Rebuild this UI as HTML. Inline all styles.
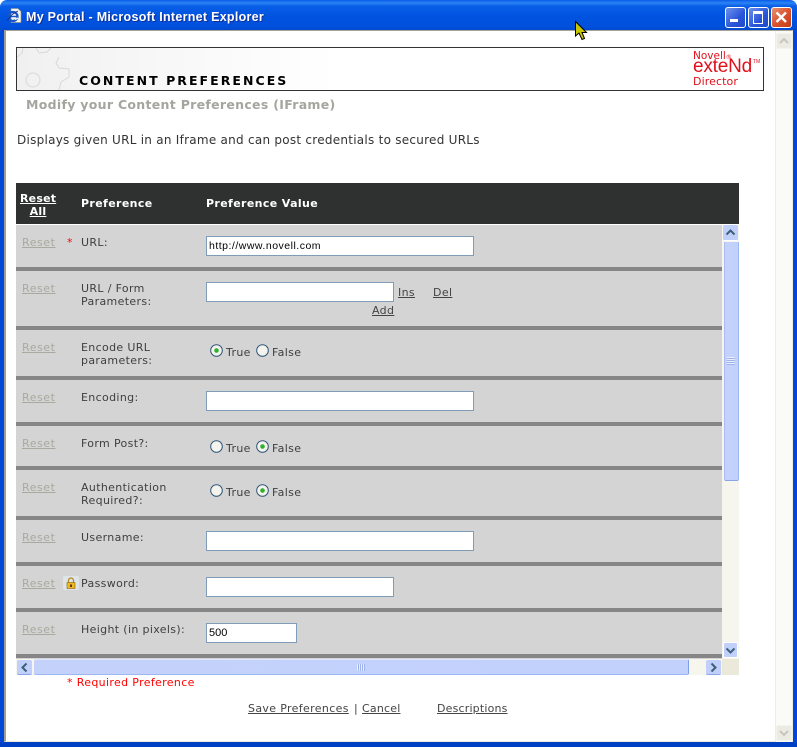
<!DOCTYPE html>
<html><head><meta charset="utf-8"><style>
html,body{margin:0;padding:0;width:797px;height:747px;overflow:hidden;background:#fff}
#w{position:relative;width:797px;height:747px;overflow:hidden;font-family:"DejaVu Sans",sans-serif;font-size:11px;letter-spacing:.35px;color:#3f3f3f;background:#fff}
#w div,#w span.a,#w a{position:absolute;white-space:nowrap}
a{color:#444;text-decoration:underline}
.r{left:22px;color:#a9a9a0;text-decoration:underline;line-height:13px;letter-spacing:.55px}
.l{left:81px;line-height:13px}
.s{left:16px;width:706px;height:4px;background:#868686}
.i{background:#fff;border:1px solid #7f9db9;box-sizing:border-box;height:20px;left:206px;font-family:"Liberation Sans",sans-serif;font-size:10.5px;color:#000;line-height:18px;padding-left:2px;letter-spacing:.5px}
.t{line-height:13px}
.sb{background:linear-gradient(90deg,#c4d2fb,#c2d1fc);box-sizing:border-box}
</style></head><body><div id="w">

<!-- window frame -->
<div style="left:0;top:0;width:797px;height:30px;background:linear-gradient(180deg,#0a5be6 0,#2a86f5 3px,#0a5fe8 6px,#0053e0 16px,#0050dc 27px,#0248cc 30px);border-radius:7px 7px 0 0"></div>
<div style="left:0;top:30px;width:4px;height:717px;background:#0049d8"></div>
<div style="left:793px;top:30px;width:4px;height:717px;background:#0049d8"></div>
<div style="left:0;top:742px;width:797px;height:5px;background:#0040c4"></div>
<div style="left:4px;top:30px;width:789px;height:712px;box-sizing:border-box;border-top:1px solid #a8a596;border-left:2px solid #a09e92;border-right:1px solid #ece9d8;border-bottom:1px solid #ece9d8;background:#fff"></div>

<!-- title icon -->
<svg style="position:absolute;left:7px;top:8px" width="15" height="16" viewBox="0 0 15 16"><path d="M4 0.500h7l3 3v11H4z" fill="#f4f4ee" stroke="#8a8a80" stroke-width=".6"/><circle cx="6" cy="8.500" r="4.500" fill="none" stroke="#1a55c8" stroke-width="2.200"/><path d="M2 8.500h8" stroke="#1a55c8" stroke-width="1.400"/><path d="M8 11.500L11 10" stroke="#f4f4ee" stroke-width="1.500"/><path d="M0.500 13C1 10 6 5 11 3" fill="none" stroke="#0b2f8c" stroke-width=".8"/></svg>
<div style="left:26px;top:9px;font:bold 12.5px/16px 'Liberation Sans',sans-serif;color:#fff;letter-spacing:.28px;text-shadow:1px 1px 0 #0c2f9c">My Portal - Microsoft Internet Explorer</div>

<!-- window buttons -->
<div style="left:725px;top:7px;width:19px;height:19px;border:1px solid #fff;border-radius:3px;background:linear-gradient(135deg,#6d92ee,#2a54d8 60%,#2048c8)"></div>
<div style="left:730px;top:19px;width:8px;height:3px;background:#fff"></div>
<div style="left:748px;top:7px;width:19px;height:19px;border:1px solid #fff;border-radius:3px;background:linear-gradient(135deg,#6d92ee,#2a54d8 60%,#2048c8)"></div>
<div style="left:753px;top:11px;width:8px;height:9px;border:1.5px solid #fff;border-top-width:3px"></div>
<div style="left:771px;top:7px;width:19px;height:19px;border:1px solid #fff;border-radius:3px;background:linear-gradient(135deg,#e8906e,#d8502c 55%,#c03c18)"></div>
<svg style="position:absolute;left:772px;top:8px" width="19" height="19"><path d="M4.500 4.500L14 14M14 4.500L4.500 14" stroke="#fff" stroke-width="2.400"/></svg>

<!-- outer scrollbar -->
<div style="left:775px;top:31px;width:18px;height:711px;background:#fafaf6;border-left:1px solid #eeede5;border-right:1px solid #eeede5;box-sizing:border-box"></div>
<div style="left:776px;top:33px;width:16px;height:16px;background:#ecebe3;border:1px solid #f4f3ec;box-sizing:border-box;border-radius:2px"></div>
<svg style="position:absolute;left:776px;top:33px" width="16" height="16"><path d="M4 10l4-4 4 4" fill="none" stroke="#c6c7bd" stroke-width="2"/></svg>
<div style="left:776px;top:725px;width:16px;height:16px;background:#ecebe3;border:1px solid #f4f3ec;box-sizing:border-box;border-radius:2px"></div>
<svg style="position:absolute;left:776px;top:725px" width="16" height="16"><path d="M4 6l4 4 4-4" fill="none" stroke="#c6c7bd" stroke-width="2"/></svg>

<!-- banner -->
<div style="left:16px;top:47px;width:748px;height:44px;box-sizing:border-box;border:1px solid #333;background:linear-gradient(90deg,#f0f0f0 0,#f7f7f7 130px,#fff 320px)"></div>
<svg style="position:absolute;left:17px;top:48px" width="60" height="42"><g fill="none" stroke="#d8d8d8" stroke-width="1"><circle cx="16" cy="32" r="7"/><path d="M0 9L5 5L6 0M19 0L22 5L30 4L34 0M42 9L39 15L42 20L52 21L52 29L44 34L42 42"/></g></svg>
<div style="left:79px;top:73px;font:bold 12.5px/15px 'DejaVu Sans',sans-serif;color:#000;letter-spacing:2.05px">CONTENT PREFERENCES</div>
<div style="left:693px;top:50px;font:10.500px/12px 'DejaVu Sans',sans-serif;color:#e0101c;letter-spacing:0">Novell<span style="font-size:6px">®</span></div>
<div style="left:693px;top:56px;font:19px/22px 'Liberation Sans',sans-serif;color:#e0101c;letter-spacing:-.2px">exteNd</div>
<div style="left:753px;top:59px;font:5px/6px 'Liberation Sans',sans-serif;color:#e0101c;letter-spacing:0">TM</div>
<div style="left:693px;top:75px;font:11px/13px 'DejaVu Sans',sans-serif;color:#e0101c;letter-spacing:.1px">Director</div>

<div style="left:26px;top:97px;font:bold 12.500px/16px 'DejaVu Sans',sans-serif;color:#a5a5a0;letter-spacing:.3px">Modify your Content Preferences (IFrame)</div>
<div style="left:17px;top:132px;font-size:12px;line-height:16px;color:#333;letter-spacing:.26px">Displays given URL in an Iframe and can post credentials to secured URLs</div>

<!-- table header -->
<div style="left:16px;top:183px;width:723px;height:41px;background:#2f3130"></div>
<div style="left:20px;top:192px;width:36px;text-align:center;font:bold 11px/13px 'DejaVu Sans',sans-serif;color:#fff;text-decoration:underline;letter-spacing:.2px">Reset<br>All</div>
<div style="left:81px;top:197px;font:bold 11px/13px 'DejaVu Sans',sans-serif;color:#fff;letter-spacing:.37px">Preference</div>
<div style="left:206px;top:197px;font:bold 11px/13px 'DejaVu Sans',sans-serif;color:#fff;letter-spacing:.37px">Preference Value</div>

<!-- table body -->
<div style="left:16px;top:225px;width:706px;height:434px;background:#d4d4d4"></div>
<div class="s" style="top:267px"></div><div class="s" style="top:326px"></div><div class="s" style="top:376px"></div><div class="s" style="top:422px"></div><div class="s" style="top:466px"></div><div class="s" style="top:516px"></div><div class="s" style="top:562px"></div><div class="s" style="top:608px"></div><div class="s" style="top:654px"></div>

<div class="r" style="top:236px">Reset</div><div style="left:67px;top:236px;color:#f00;line-height:13px">*</div><div class="l" style="top:236px">URL:</div>
<div class="i" style="top:236px;width:268px">http://www.novell.com</div>

<div class="r" style="top:282px">Reset</div><div class="l" style="top:282px">URL / Form<br>Parameters:</div>
<div class="i" style="top:282px;width:188px"></div>
<a class="t" style="left:398px;top:286px">Ins</a><a class="t" style="left:433px;top:286px">Del</a><a class="t" style="left:372px;top:304px">Add</a>

<div class="r" style="top:341px">Reset</div><div class="l" style="top:341px">Encode URL<br>parameters:</div>
<svg style="position:absolute;left:210px;top:344px" width="13" height="13"><circle cx="6.500" cy="6.500" r="5.800" fill="#f4f4ee" stroke="#2f5578"/><circle cx="6.500" cy="6.500" r="2.300" fill="#2fb02f"/></svg>
<div class="t" style="left:226px;top:346px">True</div>
<svg style="position:absolute;left:256px;top:344px" width="13" height="13"><circle cx="6.500" cy="6.500" r="5.800" fill="#f4f4ee" stroke="#2f5578"/></svg>
<div class="t" style="left:272px;top:346px">False</div>

<div class="r" style="top:391px">Reset</div><div class="l" style="top:391px">Encoding:</div>
<div class="i" style="top:391px;width:268px"></div>

<div class="r" style="top:437px">Reset</div><div class="l" style="top:437px">Form Post?:</div>
<svg style="position:absolute;left:210px;top:440px" width="13" height="13"><circle cx="6.500" cy="6.500" r="5.800" fill="#f4f4ee" stroke="#2f5578"/></svg>
<div class="t" style="left:226px;top:442px">True</div>
<svg style="position:absolute;left:256px;top:440px" width="13" height="13"><circle cx="6.500" cy="6.500" r="5.800" fill="#f4f4ee" stroke="#2f5578"/><circle cx="6.500" cy="6.500" r="2.300" fill="#2fb02f"/></svg>
<div class="t" style="left:272px;top:442px">False</div>

<div class="r" style="top:481px">Reset</div><div class="l" style="top:481px">Authentication<br>Required?:</div>
<svg style="position:absolute;left:210px;top:484px" width="13" height="13"><circle cx="6.500" cy="6.500" r="5.800" fill="#f4f4ee" stroke="#2f5578"/></svg>
<div class="t" style="left:226px;top:486px">True</div>
<svg style="position:absolute;left:256px;top:484px" width="13" height="13"><circle cx="6.500" cy="6.500" r="5.800" fill="#f4f4ee" stroke="#2f5578"/><circle cx="6.500" cy="6.500" r="2.300" fill="#2fb02f"/></svg>
<div class="t" style="left:272px;top:486px">False</div>

<div class="r" style="top:531px">Reset</div><div class="l" style="top:531px">Username:</div>
<div class="i" style="top:531px;width:268px"></div>

<div class="r" style="top:577px">Reset</div><div class="l" style="top:577px">Password:</div>
<svg style="position:absolute;left:63px;top:576px" width="16" height="14"><rect width="16" height="14" rx="2" fill="#dfe4e8"/><path d="M5.500 7V4.500a2.500 2.500 0 0 1 5 0V7" fill="none" stroke="#b08a20" stroke-width="1.200"/><rect x="4" y="6.500" width="8" height="6" fill="#eeb820" stroke="#8a6410" stroke-width=".6"/><rect x="7" y="8.500" width="2" height="2.500" fill="#5a3c08"/></svg>
<div class="i" style="top:577px;width:188px"></div>

<div class="r" style="top:623px">Reset</div><div class="l" style="top:623px">Height (in pixels):</div>
<div class="i" style="top:623px;width:91px;font-size:11px;letter-spacing:0">500</div>

<!-- inner vertical scrollbar -->
<div style="left:722px;top:225px;width:17px;height:434px;background:#f6f5ee"></div>
<div style="left:723px;top:225px;width:15px;height:16px;background:#c1d0fb;border-bottom:1px solid #fff;box-sizing:border-box;border-radius:2px"></div>
<svg style="position:absolute;left:723px;top:225px" width="15" height="16"><path d="M3.500 9.500l4-4 4 4" fill="none" stroke="#3d5f78" stroke-width="2"/></svg>
<div class="sb" style="left:724px;top:242px;width:15px;height:239px;border-left:1px solid #aebdf0;border-right:1px solid #9cb8f0;border-bottom:1px solid #8aa4e8;border-radius:0 0 2px 2px"></div>
<div style="left:727px;top:357px;width:8px;height:8px;background:repeating-linear-gradient(180deg,#e8edfd 0,#e8edfd 1px,#9fb4ea 1px,#9fb4ea 2px)"></div>
<div style="left:723px;top:642px;width:15px;height:16px;background:#c1d0fb;border:1px solid #fff;box-sizing:border-box;border-radius:2px"></div>
<svg style="position:absolute;left:723px;top:642px" width="15" height="16"><path d="M3.500 6.500l4 4 4-4" fill="none" stroke="#3d5f78" stroke-width="2"/></svg>

<!-- inner horizontal scrollbar -->
<div style="left:16px;top:659px;width:706px;height:16px;background:#f6f5ee"></div>
<div style="left:722px;top:659px;width:17px;height:16px;background:#ebe9da"></div>
<div style="left:17px;top:660px;width:15px;height:15px;background:#c1d0fb;border-radius:2px;border-bottom:1px solid #8aa4e8;box-sizing:border-box"></div>
<svg style="position:absolute;left:17px;top:660px" width="15" height="15"><path d="M9.500 3.500l-4 4 4 4" fill="none" stroke="#3d5f78" stroke-width="2"/></svg>
<div class="sb" style="left:34px;top:659px;width:655px;height:16px;border-top:1px solid #dfe6fd;border-right:1px solid #7f9ee8;border-bottom:1px solid #9cb8f0;border-radius:2px"></div>
<div style="left:357px;top:664px;width:8px;height:7px;background:repeating-linear-gradient(90deg,#e8edfd 0,#e8edfd 1px,#9fb4ea 1px,#9fb4ea 2px)"></div>
<div style="left:706px;top:660px;width:15px;height:15px;background:#c1d0fb;border-radius:2px;border-bottom:1px solid #8aa4e8;box-sizing:border-box"></div>
<svg style="position:absolute;left:706px;top:660px" width="15" height="15"><path d="M5.500 3.500l4 4-4 4" fill="none" stroke="#3d5f78" stroke-width="2"/></svg>

<!-- footer -->
<div class="t" style="left:67px;top:676px;color:#f00">* Required Preference</div>
<a class="t" style="left:248px;top:702px">Save Preferences</a>
<div class="t" style="left:354px;top:702px">|</div>
<a class="t" style="left:362px;top:702px;letter-spacing:.2px">Cancel</a>
<a class="t" style="left:437px;top:702px;letter-spacing:.18px">Descriptions</a>

<!-- cursor -->
<svg style="position:absolute;left:574px;top:20px" width="14" height="21"><path d="M1.500 1.500V16l3.500-3 3 6.500 2.500-1-2.500-6h4.500z" fill="#c8c800" stroke="#000" stroke-width="1"/></svg>

</div></body></html>
